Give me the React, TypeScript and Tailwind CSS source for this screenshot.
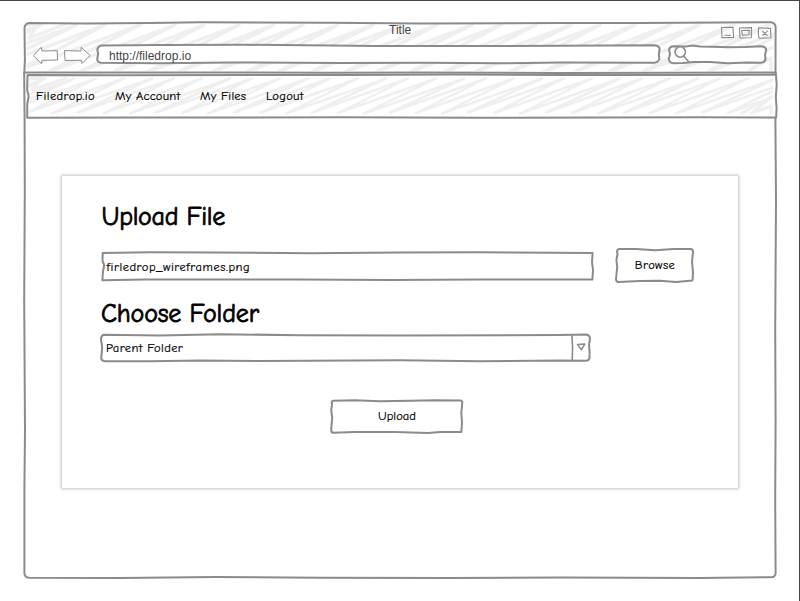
import type { ReactNode } from "react";

const hand =
  "font-['Comic_Sans_MS','Comic_Neue',Inter,'Noto_Sans',sans-serif] font-medium text-black whitespace-nowrap";
const small = `${hand} text-[12.5px] [-webkit-text-stroke:0.2px_black]`;
const heading = `${hand} text-[26px] [-webkit-text-stroke:0.8px_black]`;

type SketchProps = { viewBox: string; children: ReactNode };

/** Hand-drawn outline stretched behind the content of its box. */
function Sketch({ viewBox, children }: SketchProps) {
  return (
    <svg
      viewBox={viewBox}
      className="pointer-events-none absolute inset-0 h-full w-full overflow-visible"
      fill="none"
      stroke="#8b8b8b"
      strokeWidth="2"
      strokeLinejoin="round"
      strokeLinecap="round"
      aria-hidden="true"
    >
      {children}
    </svg>
  );
}

/** Continuous marker zigzag used as toolbar shading. */
function hatch(start: number, end: number, step: number, top: number, bottom: number, reach: number) {
  let d = "";
  for (let x = start, i = 0; x < end; x += step, i++) {
    const wobble = (i % 3) - 1;
    d += `${i === 0 ? "M" : "L"}${x} ${bottom + wobble * 0.5}L${x + reach + wobble * 2} ${top}`;
  }
  return d;
}

function WindowButtons() {
  return (
    <svg width="52" height="14" viewBox="720 26 52 14" fill="none" stroke="#8b8b8b" strokeWidth="1.1" strokeLinejoin="round">
      <path d="M721.5 27.5L733 27.2L733.6 37.4L722 37.6Z M724.5 35.2H731" />
      <path d="M739.5 28L751.6 27.6L751.3 37.8L740 38Z M741.7 30.5L749.4 30.3L749 34.8L742.3 35.2Z" />
      <path d="M758.6 27.8L770.5 28.4L771 37.7L759 38.2L758.3 34Z M762 31L767.6 35.6M768 30.6L762.3 35.5" />
    </svg>
  );
}

function Arrows() {
  return (
    <svg width="58" height="20" viewBox="33 44 58 20" className="shrink-0" fill="white" stroke="#8b8b8b" strokeWidth="1">
      <path d="M33.2 55.5L41.3 47.3L42 51L57.2 50.6L57.6 60L42 60.3L41.4 63.6Z" />
      <path d="M64.5 50.6L81 51L81.3 47.3L90 55.5L82 63.5L81.5 60.2L65 60.5Z" />
    </svg>
  );
}

function BrowserChrome() {
  return (
    <header className="relative h-[50px] shrink-0 font-['Liberation_Sans',Arial,sans-serif] text-[12px] text-[#444]">
      <Sketch viewBox="24 22 752 50">
        <clipPath id="chrome-clip">
          <rect x="26.5" y="24" width="747" height="47" />
        </clipPath>
        <g clipPath="url(#chrome-clip)">
          <path d={hatch(-118, 730, 33, 25, 72, 126)} stroke="#efefef" strokeWidth="3.4" />
          <path d="M27 25L39 24L29 38L66 24M750 70L771 58V71" stroke="#efefef" strokeWidth="3.4" />
        </g>
      </Sketch>
      <div className="relative flex h-[22px] justify-end pl-[365px] pr-[4px] pt-[4px]">
        <span className="-mt-[3px] mr-auto leading-[14px]">Title</span>
        <WindowButtons />
      </div>
      <div className="relative flex items-center pl-[9px] pr-[9px]">
        <Arrows />
        <div className="relative ml-[5px] flex h-[20px] w-[565px] items-center pl-[13px]">
          <Sketch viewBox="96 44 565 20">
            <path
              fill="white"
              d="M102 45.6L160 45L245 44.8L330 45.4L375 46L500 46L560 45.7L654 45.2Q659 45.3 659.7 49L658.8 54L659.4 59Q658 62.6 654 62.7L560 62.6L500 63.3L425 62.7L340 63L230 62.5L160 63.3L101 62.8Q97.4 62.5 97.2 59L98.2 53.5L97.3 50Q98 46 102 45.6Z"
            />
          </Sketch>
          <span className="relative pt-[3px] leading-[20px]">http://filedrop.io</span>
        </div>
        <div className="relative ml-[7px] h-[20px] w-[99px]">
          <Sketch viewBox="668 44 99 20">
            <path
              fill="white"
              d="M673 46.3L686 46.5L692 45.5L700 46.5L712 46.8L728 47.2L745 47L761 46.2Q765.8 46.6 766.2 50L765 55L765.6 59Q765 62 761 62.8L748 62.6L728 63.2L710 62L694 62L683 63L673 63.2Q669 62.6 668.8 59L670 54L669 50Q669.5 47 673 46.3Z"
            />
            <circle cx="680.2" cy="52" r="5.2" fill="white" strokeWidth="1.6" />
            <path d="M684 56.5L688.5 61.5" strokeWidth="1.7" />
          </Sketch>
        </div>
      </div>
    </header>
  );
}

function NavBar() {
  return (
    <nav className={`relative ml-[2px] mt-[2px] flex h-[45px] w-[751px] shrink-0 pl-[10px] leading-[44px] ${small}`}>
      <Sketch viewBox="26 74 751 45">
        <clipPath id="nav-clip">
          <rect x="29" y="77" width="744" height="38" />
        </clipPath>
        <rect x="27.2" y="75" width="749" height="42.5" fill="white" stroke="none" />
        <g clipPath="url(#nav-clip)">
          <path d={hatch(-78, 745, 26, 78.5, 113, 98)} stroke="#efefef" strokeWidth="2.5" />
          <path d="M30 79L42 78L32 90L66 78M742 113L771 97L752 113L771 106V113" stroke="#efefef" strokeWidth="3" />
        </g>
        <path d="M27.5 75L120 75.3L250 75L350 75L450 74.6L560 75L680 75L776 74.6L776.7 85L775.8 97L776.6 108L776.2 117.6L700 117.3L600 117.6L480 117.7L340 117.2L250 117.6L140 117.5L27.2 117.8L27.3 104L28.6 96L27.2 90Z" />
      </Sketch>
      <a className="relative w-[79px] tracking-[0.38px]">Filedrop.io</a>
      <a className="relative w-[85px] tracking-[0.22px]">My Account</a>
      <a className="relative w-[66px] tracking-[0.22px]">My Files</a>
      <a className="relative tracking-[0.3px]">Logout</a>
    </nav>
  );
}

function UploadCard() {
  return (
    <main className="ml-[38px] mt-[57px] h-[312px] w-[676px] bg-white pl-[39px] pt-[23px] shadow-[0_0_3px_1px_rgba(0,0,0,0.25)]">
      <h1 className={`h-[36px] pl-[0.5px] leading-[36px] tracking-[-0.3px] ${heading}`}>Upload File</h1>
      <div className="mt-[13px] flex items-start">
        <div className="relative mt-[4px] flex h-[29px] w-[493px] items-center pl-[5.5px]">
          <Sketch viewBox="101 252 493 29">
            <path
              fill="white"
              d="M102.7 253L150 252.3L212 252.4L310 253.3L400 252.5L480 252.2L592.6 253L592 262L593 270L592.4 279.6L480 279.5L390 280L300 279.4L145 279.5L102.4 280.2L103 271L104.2 265L102.5 261Z"
            />
          </Sketch>
          <span className={`relative leading-[18px] tracking-[0.53px] ${small}`}>firledrop_wireframes.png</span>
        </div>
        <button className="relative ml-[21px] h-[35px] w-[79px] pl-[1px]">
          <Sketch viewBox="615 248 79 35">
            <path
              fill="white"
              d="M619 249L636 249L655 250.2L674 249L691 249Q693 249.5 693 252L692 262L693 272L692.6 280Q692 281 690 280.7L676 282L660 280.7L640 281L618 282Q616 281.5 616 279L617.2 267L616.4 260L617.5 254L617 251Q617.5 249.3 619 249Z"
            />
          </Sketch>
          <span className={`relative -top-px leading-[34px] tracking-[0.4px] ${small}`}>Browse</span>
        </button>
      </div>
      <h2 className={`mt-[12px] h-[38px] leading-[38px] tracking-[-0.15px] ${heading}`}>Choose Folder</h2>
      <div className="relative mt-[1px] flex h-[28px] w-[490px] items-center pl-[5px]">
        <Sketch viewBox="101 334 490 28">
          <path
            fill="white"
            d="M104 334.8L160 335.4L220 334.2L300 335.2L400 335.5L560 335L586 334.4Q589.8 335 590 338.5L589 345L589.6 352L589.5 358Q589 360.6 586 360.7L560 360.4L480 361.3L400 360.3L260 361L200 360.4L150 361.3L105 361.2Q101.3 361 101.2 358L102.2 348L101 339Q101.3 335.3 104 334.8Z"
          />
          <path d="M572 335.5L572.6 348L572.2 360" strokeWidth="1.6" />
          <path d="M577.5 344.6L584.8 344L581.4 349.8Z" strokeWidth="1.5" />
        </Sketch>
        <span className={`relative leading-[18px] tracking-[0.38px] ${small}`}>Parent Folder</span>
      </div>
      <button className="relative ml-[229px] mt-[37px] block h-[35px] w-[133px] pl-[1px]">
        <Sketch viewBox="330 399 133 35">
          <path
            fill="white"
            d="M333 400.7L355 400.3L380 401.2L410 400.7L435 400.2L461 400.5L462.3 402L461.3 413L462 422L461.4 432L440 432L428 433L395 432L355 432L333 432.8Q331 432.5 331.2 429L332.2 418L331.2 410L332 405Q331 401.5 333 400.7Z"
          />
        </Sketch>
        <span className={`relative leading-[33px] tracking-[0.05px] ${small}`}>Upload</span>
      </button>
    </main>
  );
}

export default function App() {
  return (
    <div className="h-[601px] w-[800px] overflow-hidden border-r border-t border-[#454549] bg-white pl-[24px] pt-[21px]">
      <div className="relative flex h-[556px] w-[752px] flex-col">
        <BrowserChrome />
        <Sketch viewBox="24 22 752 556">
          <path d="M29 23L85 23.4L150 23L200 22.3L330 22.8L420 23.5L560 23L640 23L720 22.4L771 22.3Q775.3 23 775.6 27L775.4 120L776 200L775.2 330L775.6 420L775.2 500L775.6 573Q775.4 577.4 771 577.2L700 578L560 577.6L450 578L320 577.8L215 577L120 578L29 577.8Q24.6 577.6 24.4 573L24.4 490L25 430L24.2 300L24.8 190L24.6 120L24.2 75L24.9 60L24.5 28Q25 23.4 29 23Z" />
          <path d="M24 72.6L200 72.4L330 72.8L420 72.5L560 73L776 72.5" strokeWidth="2" />
        </Sketch>
        <NavBar />
        <UploadCard />
      </div>
    </div>
  );
}
